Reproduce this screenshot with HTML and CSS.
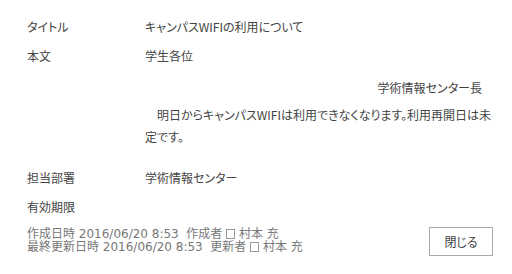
FILE: index.html
```html
<!DOCTYPE html>
<html lang="ja">
<head>
    <meta charset="UTF-8">
    <meta name="viewport" content="width=device-width, initial-scale=1.0">
    <title>お知らせ</title>
    <link rel="stylesheet" href="styles.css">
</head>
<body>

    <div class="form">
        <div class="row">
            <div class="label">タイトル</div>
            <div class="value">キャンパスWIFIの利用について</div>
        </div>
        <div class="row">
            <div class="label">本文</div>
            <div class="value">
                <p class="greeting">学生各位</p>
                <p class="sign">学術情報センター長</p>
                <p class="message">　明日からキャンパスWIFIは利用できなくなります。利用再開日は未<br>定です。</p>
            </div>
        </div>
        <div class="row">
            <div class="label">担当部署</div>
            <div class="value">学術情報センター</div>
        </div>
        <div class="row">
            <div class="label">有効期限</div>
            <div class="value"></div>
        </div>
    </div>

    <div class="footer">
        <div class="meta">
            <div>作成日時 2016/06/20 8:53&nbsp;&nbsp;作成者 <span class="presence"></span> 村本 充</div>
            <div>最終更新日時 2016/06/20 8:53&nbsp;&nbsp;更新者 <span class="presence"></span> 村本 充</div>
        </div>
        <button class="close-btn">閉じる</button>
    </div>

</body>
</html>
```

FILE: styles.css
```css
body {
    margin: 0;
    padding: 13px 17px 0 27px;
    background-color: #fff;
    color: #444;
    font-family: "Noto Sans CJK JP", sans-serif;
    font-size: 12px;
    font-feature-settings: "palt";
}

.row {
    display: flex;
    padding: 5px 0 6px;
    line-height: 18px;
}

.label {
    width: 118px;
    flex-shrink: 0;
}

.value {
    flex: 1;
    min-height: 18px;
}

.value p {
    margin: 0;
}

.sign {
    margin-top: 14px !important;
    text-align: right;
    padding-right: 13px;
}

.message {
    margin: 7px 0 10px !important;
    line-height: 22px;
    white-space: nowrap;
}

.footer {
    display: flex;
    justify-content: space-between;
    align-items: flex-start;
    margin-top: 4px;
    padding-right: 2px;
    color: #777;
    font-family: "DejaVu Sans", "Noto Sans CJK JP", sans-serif;
    font-size: 12px;
    line-height: 13px;
}

.meta {
    padding-top: 2px;
}

.presence {
    display: inline-block;
    width: 7px;
    height: 8px;
    border: 1px solid #999;
    vertical-align: -1px;
}

.close-btn {
    width: 64px;
    height: 29px;
    margin-top: 1px;
    background: #fff;
    border: 1px solid #ababab;
    color: #444;
    font-family: "Noto Sans CJK JP", sans-serif;
    font-size: 12px;
    font-feature-settings: "palt";
    padding: 0;
}
```
